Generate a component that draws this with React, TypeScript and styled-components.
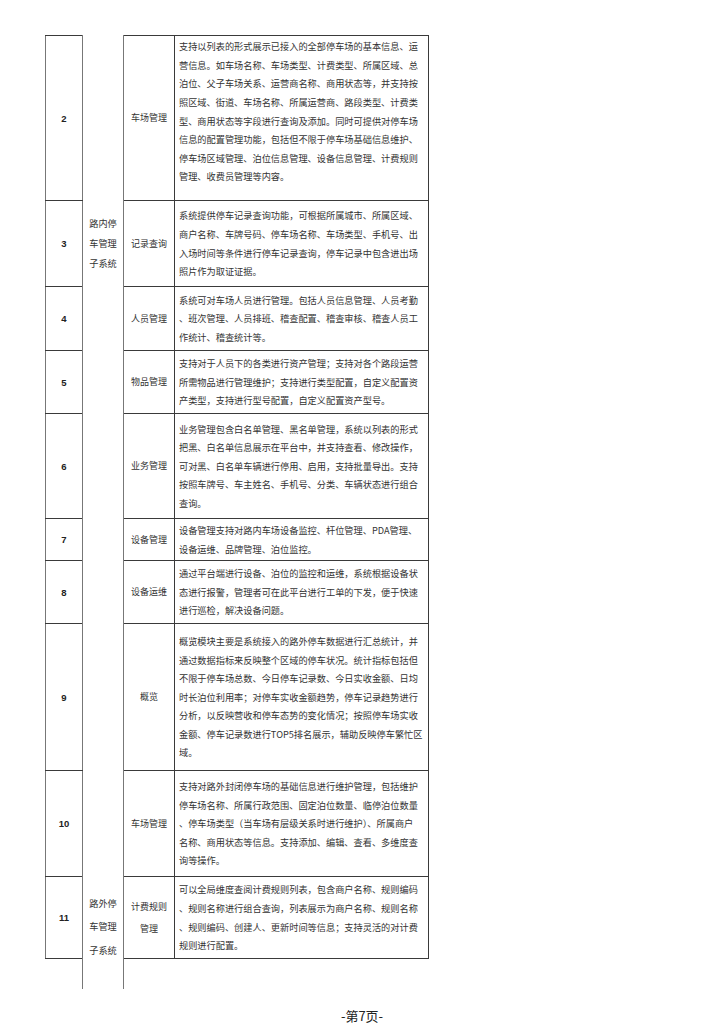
import styled, { createGlobalStyle } from "styled-components";

const GlobalStyle = createGlobalStyle`
  html, body {
    margin: 0;
    padding: 0;
    background: #ffffff;
  }
  body {
    font-family: "Noto Sans CJK SC", "Liberation Sans", sans-serif;
    color: #333;
  }
`;

const Page = styled.div`
  width: 724px;
  height: 1024px;
  box-sizing: border-box;
  padding: 35px 0 0 45px;
  overflow: hidden;
`;

const Sheet = styled.table`
  border-collapse: collapse;
  table-layout: fixed;
  width: 383px;
`;

const Row = styled.tr<{ $h: number }>`
  height: ${(p) => p.$h}px;
`;

const NumCell = styled.td<{ $blank?: boolean }>`
  border: ${(p) => (p.$blank ? "none" : "1px solid #3a3a3a")};
  border-left-color: #777;
  border-right-color: #777;
  padding: 0;
  text-align: center;
  vertical-align: middle;
  font-family: "Liberation Sans", Arial, sans-serif;
  font-size: 9.5px;
  font-weight: bold;
  color: #222;
`;

const SysCell = styled.td<{ $top: number; $lh: number }>`
  border-left: 1px solid #777;
  border-right: 1px solid #777;
  border-top: none;
  border-bottom: none;
  padding: ${(p) => p.$top}px 0 0 0;
  vertical-align: top;
  text-align: center;
  font-size: 9.2px;
  line-height: ${(p) => p.$lh}px;
  color: #333;
`;

const SysLine = styled.div`
  white-space: nowrap;
`;

const ModCell = styled.td<{ $blank?: boolean }>`
  border: ${(p) => (p.$blank ? "none" : "1px solid #3a3a3a")};
  border-left-color: #777;
  padding: 0;
  text-align: center;
  vertical-align: middle;
  font-size: 9px;
  line-height: 22px;
  color: #333;
`;

const DescCell = styled.td<{ $blank?: boolean; $padBottom?: number }>`
  border: ${(p) => (p.$blank ? "none" : "1px solid #3a3a3a")};
  border-left-color: #2a2a2a;
  padding: 0 0 ${(p) => p.$padBottom ?? 0}px 4px;
  vertical-align: middle;
  font-size: 9.2px;
  line-height: 18.6px;
  color: #333;
`;

const DescLine = styled.div`
  white-space: nowrap;
`;

const Footer = styled.div`
  width: 724px;
  margin: 19px 0 0 -45px;
  text-align: center;
  font-size: 13px;
  line-height: 16px;
  color: #222;
`;

type itemType = {
  no: number;
  height: number;
  module: string[];
  lines: string[];
  padBottom?: number;
};

type groupType = {
  name: string[];
  top: number;
  lineHeight: number;
  items: itemType[];
};

const groups: groupType[] = [
  {
    name: ["路内停", "车管理", "子系统"],
    top: 177,
    lineHeight: 20,
    items: [
      {
        no: 2,
        height: 165,
        module: ["车场管理"],
        padBottom: 13,
        lines: [
          "支持以列表的形式展示已接入的全部停车场的基本信息、运",
          "营信息。如车场名称、车场类型、计费类型、所属区域、总",
          "泊位、父子车场关系、运营商名称、商用状态等，并支持按",
          "照区域、街道、车场名称、所属运营商、路段类型、计费类",
          "型、商用状态等字段进行查询及添加。同时可提供对停车场",
          "信息的配置管理功能，包括但不限于停车场基础信息维护、",
          "停车场区域管理、泊位信息管理、设备信息管理、计费规则",
          "管理、收费员管理等内容。",
        ],
      },
      {
        no: 3,
        height: 86,
        module: ["记录查询"],
        lines: [
          "系统提供停车记录查询功能，可根据所属城市、所属区域、",
          "商户名称、车牌号码、停车场名称、车场类型、手机号、出",
          "入场时间等条件进行停车记录查询，停车记录中包含进出场",
          "照片作为取证证据。",
        ],
      },
      {
        no: 4,
        height: 64,
        module: ["人员管理"],
        lines: [
          "系统可对车场人员进行管理。包括人员信息管理、人员考勤",
          "、班次管理、人员排班、稽查配置、稽查审核、稽查人员工",
          "作统计、稽查统计等。",
        ],
      },
      {
        no: 5,
        height: 63,
        module: ["物品管理"],
        lines: [
          "支持对于人员下的各类进行资产管理；支持对各个路段运营",
          "所需物品进行管理维护；支持进行类型配置，自定义配置资",
          "产类型，支持进行型号配置，自定义配置资产型号。",
        ],
      },
      {
        no: 6,
        height: 105,
        module: ["业务管理"],
        lines: [
          "业务管理包含白名单管理、黑名单管理，系统以列表的形式",
          "把黑、白名单信息展示在平台中，并支持查看、修改操作，",
          "可对黑、白名单车辆进行停用、启用，支持批量导出。支持",
          "按照车牌号、车主姓名、手机号、分类、车辆状态进行组合",
          "查询。",
        ],
      },
      {
        no: 7,
        height: 42,
        module: ["设备管理"],
        lines: [
          "设备管理支持对路内车场设备监控、杆位管理、PDA管理、",
          "设备运维、品牌管理、泊位监控。",
        ],
      },
      {
        no: 8,
        height: 63,
        module: ["设备运维"],
        lines: [
          "通过平台端进行设备、泊位的监控和运维，系统根据设备状",
          "态进行报警，管理者可在此平台进行工单的下发，便于快速",
          "进行巡检，解决设备问题。",
        ],
      },
    ],
  },
  {
    name: ["路外停", "车管理", "子系统"],
    top: 268,
    lineHeight: 23.5,
    items: [
      {
        no: 9,
        height: 147,
        module: ["概览"],
        lines: [
          "概览模块主要是系统接入的路外停车数据进行汇总统计，并",
          "通过数据指标来反映整个区域的停车状况。统计指标包括但",
          "不限于停车场总数、今日停车记录数、今日实收金额、日均",
          "时长泊位利用率；对停车实收金额趋势，停车记录趋势进行",
          "分析，以反映营收和停车态势的变化情况；按照停车场实收",
          "金额、停车记录数进行TOP5排名展示，辅助反映停车繁忙区",
          "域。",
        ],
      },
      {
        no: 10,
        height: 106,
        module: ["车场管理"],
        lines: [
          "支持对路外封闭停车场的基础信息进行维护管理，包括维护",
          "停车场名称、所属行政范围、固定泊位数量、临停泊位数量",
          "、停车场类型（当车场有层级关系时进行维护）、所属商户",
          "名称、商用状态等信息。支持添加、编辑、查看、多维度查",
          "询等操作。",
        ],
      },
      {
        no: 11,
        height: 82,
        module: ["计费规则", "管理"],
        lines: [
          "可以全局维度查阅计费规则列表，包含商户名称、规则编码",
          "、规则名称进行组合查询，列表展示为商户名称、规则名称",
          "、规则编码、创建人、更新时间等信息；支持灵活的对计费",
          "规则进行配置。",
        ],
      },
    ],
  },
];

// the second group keeps going onto the next page
const TAIL_HEIGHT = 30;

const App = () => {
  return (
    <Page>
      <GlobalStyle />
      <Sheet>
        <colgroup>
          <col style={{ width: 37 }} />
          <col style={{ width: 41 }} />
          <col style={{ width: 51 }} />
          <col style={{ width: 254 }} />
        </colgroup>
        <tbody>
          {groups.map((group, gi) => {
            const isLast = gi === groups.length - 1;
            const span = group.items.length + (isLast ? 1 : 0);
            const rows = group.items.map((item, i) => (
              <Row key={item.no} $h={item.height}>
                <NumCell>{item.no}</NumCell>
                {i === 0 && (
                  <SysCell rowSpan={span} $top={group.top} $lh={group.lineHeight}>
                    {group.name.map((n) => (
                      <SysLine key={n}>{n}</SysLine>
                    ))}
                  </SysCell>
                )}
                <ModCell>
                  {item.module.map((m) => (
                    <div key={m}>{m}</div>
                  ))}
                </ModCell>
                <DescCell $padBottom={item.padBottom}>
                  {item.lines.map((l, li) => (
                    <DescLine key={li}>{l}</DescLine>
                  ))}
                </DescCell>
              </Row>
            ));
            if (isLast) {
              rows.push(
                <Row key="tail" $h={TAIL_HEIGHT}>
                  <NumCell $blank></NumCell>
                  <ModCell $blank></ModCell>
                  <DescCell $blank></DescCell>
                </Row>
              );
            }
            return rows;
          })}
        </tbody>
      </Sheet>
      <Footer>-第7页-</Footer>
    </Page>
  );
};

export default App;
